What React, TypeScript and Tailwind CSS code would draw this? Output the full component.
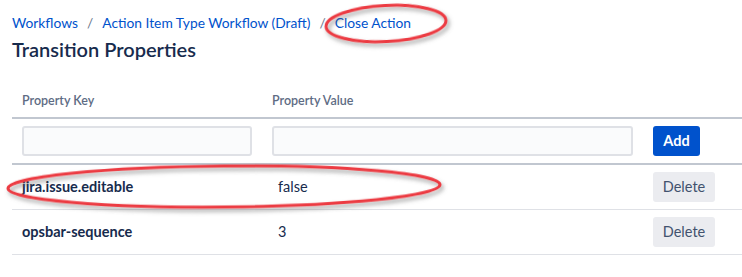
import React from "react";

interface Prop {
    key: string,
    value: string,
}

const props: Prop[] = [
    { key: "jira.issue.editable", value: "false" },
    { key: "opsbar-sequence", value: "3" },
];

export default function App() {
    return (
        <div className="relative w-[742px] h-[277px] overflow-hidden bg-white pl-3 text-[#172b4d]" style={{ fontFamily: 'Lato, "Open Sans", sans-serif' }}>
            {/* breadcrumbs */}
            <div className="pt-[13px] flex items-center text-[13.8px] leading-5 text-[#0052cc]">
                <span>Workflows</span>
                <span className="mx-[9px] text-[#6b778c]">/</span>
                <span>Action Item Type Workflow (Draft)</span>
                <span className="mx-[9px] text-[#6b778c]">/</span>
                <span>Close Action</span>
            </div>
            <h1 className="mt-[4px] text-[20px] leading-6 font-semibold">Transition Properties</h1>

            {/* table */}
            <div className="mt-[24px] w-[740px]">
                <div className="grid grid-cols-[250px_381px_1fr] h-[34px] border-b-2 border-[#c1c7d0] items-center text-[12.5px] font-semibold text-[#5e6c84]">
                    <div className="pl-[10px]">Property Key</div>
                    <div className="pl-[10px]">Property Value</div>
                    <div />
                </div>
                <div className="grid grid-cols-[250px_381px_1fr] h-[46px] border-b-2 border-[#c1c7d0] items-center">
                    <div className="pl-[10px]">
                        <div className="w-[230px] h-[30px] rounded-[3px] border-2 border-[#dfe1e6] bg-[#fafbfc]" />
                    </div>
                    <div className="pl-[10px]">
                        <div className="w-[361px] h-[30px] rounded-[3px] border-2 border-[#dfe1e6] bg-[#fafbfc]" />
                    </div>
                    <div className="pl-[10px]">
                        <button className="w-[47px] h-[30px] rounded-[3px] bg-[#0052cc] text-white text-[14.5px] font-bold">Add</button>
                    </div>
                </div>
                {props.map((p, i) => (
                    <div key={i} className="grid grid-cols-[250px_381px_1fr] h-[45px] border-b border-[#dfe1e6] items-center text-[14.5px]">
                        <div className="pl-[10px] font-bold">{p.key}</div>
                        <div className="pl-[16px]">{p.value}</div>
                        <div className="pl-[10px]">
                            <button className="w-[62px] h-[30px] rounded-[3px] bg-[#ebecf0] text-[#42526e] text-[14.5px]">Delete</button>
                        </div>
                    </div>
                ))}
            </div>

            {/* red annotation marks */}
            <svg className="absolute left-0 top-0 pointer-events-none" width="742" height="277" viewBox="0 0 742 277">
                <defs>
                    <filter id="sh" x="-10%" y="-40%" width="120%" height="180%">
                        <feDropShadow dx="2" dy="3" stdDeviation="2" floodColor="#555" floodOpacity="0.55" />
                    </filter>
                </defs>
                <ellipse cx="386" cy="23.5" rx="60" ry="18" transform="rotate(-3 386 23.5)" fill="none" stroke="#ec3a42" strokeWidth="3" filter="url(#sh)" />
                <ellipse cx="224" cy="186.5" rx="216" ry="20.5" transform="rotate(-0.5 224 186.5)" fill="none" stroke="#ec3a42" strokeWidth="3" filter="url(#sh)" />
            </svg>
        </div>
    );
}
